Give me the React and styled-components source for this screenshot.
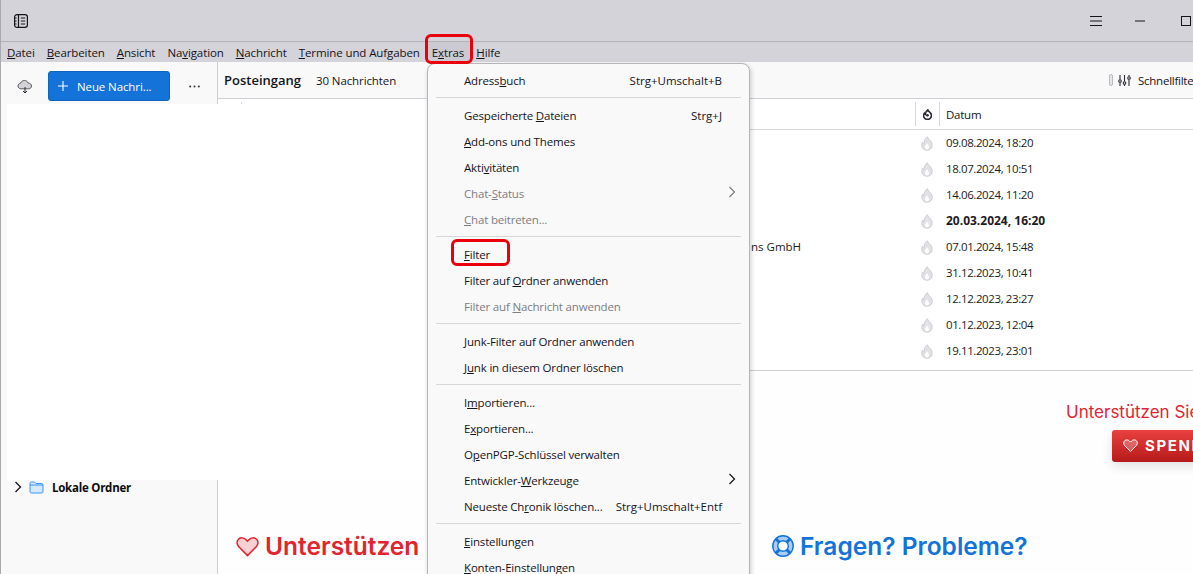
import styled, { createGlobalStyle } from "styled-components";

const GlobalStyle = createGlobalStyle`
  html, body {
    margin: 0;
    padding: 0;
    background: #fff;
  }
  body {
    font-family: "Open Sans", "Liberation Sans", sans-serif;
    font-size: 11.5px;
    letter-spacing: -0.25px;
    color: #15141a;
  }
`;

//MENU DATA ("&" marks the access key)
const menuGroups = [
  [{ label: "Adress&buch", keys: "Strg+Umschalt+B" }],
  [
    { label: "Gespeicherte &Dateien", keys: "Strg+J" },
    { label: "&Add-ons und Themes" },
    { label: "Akti&vitäten" },
    { label: "Chat-&Status", off: true, sub: true },
    { label: "&Chat beitreten...", off: true },
  ],
  [
    { label: "&Filter" },
    { label: "Filter auf &Ordner anwenden" },
    { label: "Filter auf &Nachricht anwenden", off: true },
  ],
  [
    { label: "&Junk-Filter auf Ordner anwenden" },
    { label: "J&unk in diesem Ordner löschen" },
  ],
  [
    { label: "I&mportieren..." },
    { label: "E&xportieren..." },
    { label: "O&penPGP-Schlüssel verwalten" },
    { label: "Entwickler-&Werkzeuge", sub: true },
    { label: "Neueste Ch&ronik löschen...", keys: "Strg+Umschalt+Entf" },
  ],
  [{ label: "&Einstellungen" }, { label: "&Konten-Einstellungen" }],
];

const menuBarItems = [
  "&Datei",
  "&Bearbeiten",
  "&Ansicht",
  "Na&vigation",
  "&Nachricht",
  "&Termine und Aufgaben",
  "E&xtras",
  "&Hilfe",
];

const rows = [
  { date: "09.08.2024, 18:20" },
  { date: "18.07.2024, 10:51" },
  { date: "14.06.2024, 11:20" },
  { date: "20.03.2024, 16:20", unread: true },
  { date: "07.01.2024, 15:48", sender: "ns GmbH" },
  { date: "31.12.2023, 10:41" },
  { date: "12.12.2023, 23:27" },
  { date: "01.12.2023, 12:04" },
  { date: "19.11.2023, 23:01" },
  { date: "" },
];

const Label = ({ text }) => {
  const [before, after] = text.split("&");
  return (
    <span>
      {before}
      <u>{after[0]}</u>
      {after.slice(1)}
    </span>
  );
};

//FRAME

const Window = styled.div`
  position: relative;
  display: flex;
  flex-direction: column;
  width: 1193px;
  height: 574px;
  overflow: hidden;
  background: #fff;
  border-left: 1px solid #a9a9ae;
  box-sizing: border-box;
`;

const TitleBar = styled.div`
  display: flex;
  align-items: center;
  justify-content: space-between;
  flex: none;
  height: 41px;
  padding: 0 2px 0 12px;
  background: #d4d3d9;
  border-bottom: 1px solid #b4b4b8;
`;

const IconButton = styled.div`
  display: flex;
  align-items: center;
  color: #15141a;
`;

const WindowButtons = styled.div`
  display: flex;
  align-items: center;
  gap: 33px;

  svg:last-child {
    margin-left: 3px;
  }
`;

const MenuBar = styled.div`
  display: flex;
  flex: none;
  height: 20px;
  background: #d4d3d9;
`;

const MenuBarItem = styled.div`
  display: flex;
  align-items: center;
  padding: 0 6px;
  letter-spacing: -0.1px;
  background: ${(props) => (props.$open ? "#cbcad2" : "transparent")};
`;

const Body = styled.div`
  display: flex;
  flex: 1;
  min-height: 0;
`;

//SIDEBAR

const Sidebar = styled.div`
  display: flex;
  flex-direction: column;
  flex: none;
  width: 216px;
  background: #f9f9fa;
  border-right: 1px solid #cfcfd3;
`;

const SidebarHead = styled.div`
  display: flex;
  align-items: center;
  height: 48px;
  padding: 0 0 0 16px;
`;

const NewButton = styled.div`
  display: flex;
  align-items: center;
  box-sizing: border-box;
  width: 122px;
  height: 30px;
  margin-left: 15px;
  padding-left: 9px;
  gap: 9px;
  letter-spacing: -0.1px;
  color: #fff;
  background: #1373d9;
  border: 1px solid #0f64bd;
  border-radius: 3px;
`;

const Dots = styled.svg`
  margin-left: 19px;
`;

const FolderRow = styled.div`
  display: flex;
  align-items: center;
  gap: 7px;
  height: 22px;
  margin-top: 366px;
  padding-left: 13px;
  font-weight: 700;
  color: #0c0c0d;
`;

const FolderName = styled.span`
  margin-left: 1px;
`;

//MAIN

const Main = styled.div`
  display: flex;
  flex-direction: column;
  flex: 1;
  min-width: 0;
`;

const ListHead = styled.div`
  display: flex;
  align-items: center;
  flex: none;
  height: 37px;
  padding: 0 0 0 6px;
  box-sizing: border-box;
  background: #f9f9fa;
  border-bottom: 1px solid #cfcfd8;
`;

const FolderTitle = styled.div`
  width: 92px;
  font-size: 13px;
  font-weight: 600;
  letter-spacing: 0;
`;

const Count = styled.div`
  letter-spacing: -0.1px;
`;

const QuickFilter = styled.div`
  display: flex;
  align-items: center;
  margin-left: auto;
  width: 84px;
  white-space: nowrap;
  overflow: hidden;
  gap: 5px;

  & > * {
    flex: none;
  }
`;

const Toggle = styled.span`
  width: 2px;
  height: 10px;
  background: #e6e6ea;
  border: 1px solid #b9b9bf;
  border-radius: 2px;
`;

const FilterText = styled.span`
  margin-left: 2px;
`;

const ColumnHead = styled.div`
  display: grid;
  grid-template-columns: 23px 674px 24px 1fr;
  align-items: center;
  flex: none;
  height: 31px;
  box-sizing: border-box;
  border-bottom: 1px solid #d7d7db;
`;

const HeadCell = styled.div`
  display: flex;
  align-items: center;
  justify-content: ${(props) => (props.$center ? "center" : "flex-start")};
  height: 24px;
  padding-left: ${(props) => (props.$center ? "0" : "6px")};
  border-left: ${(props) => (props.$line ? "1px solid #d7d7db" : "none")};
`;

const List = styled.div`
  flex: none;
  height: 240px;
  overflow: hidden;
  border-bottom: 1px solid #cfcfd8;
`;

const Row = styled.div`
  display: grid;
  grid-template-columns: 697px 24px 1fr;
  align-items: center;
  height: 26px;
  font-size: ${(props) => (props.$unread ? "12px" : "11.5px")};
  font-weight: ${(props) => (props.$unread ? 700 : 400)};
  letter-spacing: ${(props) => (props.$unread ? "0" : "-0.4px")};
  color: #1c1b22;
`;

const Sender = styled.div`
  padding: 0 0 2px 533px;
  white-space: nowrap;
  letter-spacing: 0;
`;

const FlameCell = styled.div`
  display: flex;
  justify-content: center;
`;

const DateCell = styled.div`
  padding: 0 0 2px 7px;
`;

//MESSAGE PANE

const Pane = styled.div`
  flex: 1;
  display: flex;
  flex-direction: column;
  min-height: 0;
  background: #fefefe;
  letter-spacing: 0;
`;

const DonateBlock = styled.div`
  display: flex;
  flex-direction: column;
  align-items: flex-start;
  margin: 31px 0 0 848px;
  width: 200px;
  white-space: nowrap;
`;

const DonateText = styled.div`
  font-family: Inter, sans-serif;
  font-size: 17px;
  color: #e22332;
`;

const DonateButton = styled.div`
  display: flex;
  align-items: center;
  margin: 8px 0 0 46px;
  width: 130px;
  height: 32px;
  padding: 0 0 1px 11px;
  gap: 7px;
  box-sizing: border-box;
  font-family: Inter, sans-serif;
  font-size: 15px;
  font-weight: 700;
  letter-spacing: 1.6px;
  color: #fff;
  background: linear-gradient(#ea4040, #b51a1a);
  border-radius: 3px;
  box-shadow: 0 4px 12px rgba(0, 0, 0, 0.12);
`;

const Headings = styled.div`
  display: flex;
  margin-top: 69px;
  padding-left: 18px;
  white-space: nowrap;
`;

const Heading = styled.div`
  display: flex;
  align-items: center;
  gap: 6px;
  width: ${(props) => props.$width}px;
  font-family: Inter, sans-serif;
  font-size: 24.5px;
  font-weight: 600;
  color: ${(props) => props.$color};
`;

//POPUP MENU

const Popup = styled.div`
  position: absolute;
  top: 63px;
  left: 426px;
  width: 323px;
  height: 530px;
  padding-top: 4px;
  box-sizing: border-box;
  background: #f9f9fa;
  border: 1px solid #b5b5b9;
  border-radius: 8px;
  box-shadow: 1px 2px 5px rgba(0, 0, 0, 0.2);
`;

const MenuRow = styled.div`
  display: flex;
  align-items: center;
  box-sizing: border-box;
  height: 26px;
  padding: 0 27px 2px 36px;
  position: relative;
  white-space: nowrap;
  letter-spacing: -0.17px;
  color: ${(props) => (props.$off ? "#7d7d85" : "#15141a")};
`;

const Keys = styled.span`
  margin-left: auto;
  letter-spacing: 0;
`;

const Chevron = styled.svg`
  position: absolute;
  right: 13px;
  top: 5px;
`;

const Separator = styled.div`
  height: 1px;
  margin: 3px 8px 5px;
  background: #d7d7db;
`;

//OVERLAYS

const Blank = styled.div`
  position: absolute;
  top: 104px;
  left: 6px;
  width: 420px;
  height: 376px;
  background: #fff;
`;

const Marker = styled.div`
  position: absolute;
  left: ${(props) => props.$x}px;
  top: ${(props) => props.$y}px;
  width: ${(props) => props.$w}px;
  height: ${(props) => props.$h}px;
  box-sizing: border-box;
  border: 3px solid #e8000d;
  border-radius: 6px;
`;

//ICONS

const PanelIcon = () => (
  <svg width="16" height="16" viewBox="0 0 16 16" fill="none" stroke="#15141a" strokeWidth="1.2">
    <rect x="1.6" y="1.6" width="12.8" height="12.8" rx="2.4" />
    <path d="M5.5 2v12M7.8 5h4.4M7.8 8h4.4M7.8 11h4.4M2 5h1.6M2 8h1.6M2 11h1.6" />
  </svg>
);

const CloudIcon = () => (
  <svg width="16" height="16" viewBox="0 0 16 16">
    <path
      d="M4 10.8C2 10.8 1 9.5 1 8c0-1.5 1-2.7 2.6-2.8C4.2 3.4 5.8 2.4 7.5 2.5c1.8 0 3.2 1.1 3.7 2.6 1.9 0 3.3 1.3 3.3 3 0 1.6-1.2 2.7-3 2.7z"
      fill="#d2d2d6"
      stroke="#5a5a60"
      strokeWidth="1"
    />
    <path d="M8 9v6M6 13l2 2 2-2" fill="none" stroke="#2b2a33" strokeWidth="1" />
  </svg>
);

const SlidersIcon = () => (
  <svg width="13" height="13" viewBox="0 0 13 13" fill="none" stroke="#2b2a33" strokeWidth="1.1">
    <path d="M2 1v4.500M2 8.500V12M6.500 1v6.500M6.500 10.500V12M11 1v1.500M11 5.500V12" />
    <circle cx="2" cy="7" r="1.3" />
    <circle cx="6.5" cy="9" r="1.3" />
    <circle cx="11" cy="4" r="1.3" />
  </svg>
);

const ThreadIcon = () => (
  <svg width="9" height="11" viewBox="0 0 11 13">
    <path
      d="M5.8.8C6 2.600 8 3 9.400 5c1.300 2 1 4.600-.6 6.100-1.800 1.500-4.800 1.500-6.600 0C.5 9.600.4 7 1.600 5.200 2 6 2.500 6.400 3 6.600 2.800 4.300 3.900 2 5.800.8z"
      fill="none"
      stroke="#2b2a33"
      strokeWidth="2"
    />
    <circle cx="5.5" cy="7.5" r="1.6" fill="#2b2a33" />
  </svg>
);

const FlameIcon = () => (
  <svg width="12" height="15" viewBox="0 0 12 15">
    <path
      d="M6.500.8c.2 2 2.400 3 3.800 5.200 1.400 2.300 1.100 5.200-.7 7C8.800 13.700 7.600 14.200 6 14.200c-1.700 0-3-.5-3.800-1.400C.5 11 .3 8.200 1.700 6.100 2 7 2.500 7.500 3.100 7.800 2.800 5.200 4.300 2.300 6.500.8z"
      fill="#e2e2e6"
      stroke="#cdcdd2"
      strokeWidth="1"
    />
    <path d="M6 7c.4 1.500 2 2.300 2 4.100 0 1.400-.9 2.400-2 2.400s-2-1-2-2.400C4 9.300 5.500 8.700 6 7z" fill="#fff" />
  </svg>
);

const FolderIcon = () => (
  <svg width="15" height="13" viewBox="0 0 15 13">
    <path
      d="M1 2.500A1.500 1.500 0 0 1 2.500 1h3L7 2.500h5.500A1.500 1.500 0 0 1 14 4v6.500a1.500 1.500 0 0 1-1.500 1.500h-10A1.500 1.500 0 0 1 1 10.500z"
      fill="#d5e9ff"
      stroke="#3a94f5"
      strokeWidth="1"
    />
    <path d="M1 4h13" stroke="#3a94f5" strokeWidth="1" />
  </svg>
);

const HeartIcon = ({ size, fill, stroke }) => (
  <svg width={size} height={size} viewBox="0 0 24 24" fill={fill} stroke={stroke} strokeWidth="1.6">
    <path d="M12 21.500 2.900 12.300C.4 9.700.6 6.100 2.800 4.200 5 2.400 8.200 2.700 10.200 4.700L12 6.500l1.800-1.800c2-2 5.200-2.300 7.400-.5 2.200 1.900 2.400 5.500-.1 8.100z" />
  </svg>
);

const BuoyIcon = () => (
  <svg width="22" height="22" viewBox="0 0 22 22">
    <circle cx="11" cy="11" r="8" fill="none" stroke="#a9cdf5" strokeWidth="5" />
    <circle cx="11" cy="11" r="10.2" fill="none" stroke="#1373d9" strokeWidth="1.4" />
    <circle cx="11" cy="11" r="5.3" fill="#fff" stroke="#1373d9" strokeWidth="1.4" />
    <path d="M3.800 3.800 7.300 7.300M18.200 3.800 14.700 7.300M3.800 18.200 7.300 14.700M18.200 18.200 14.700 14.700" stroke="#1373d9" strokeWidth="3" />
  </svg>
);

const ChevronRight = ({ color }) => (
  <svg width="8" height="12" viewBox="0 0 8 12" fill="none" stroke={color} strokeWidth="1.3">
    <path d="M1.500 1 6.500 6l-5 5" />
  </svg>
);

const App = () => {
  return (
    <>
      <GlobalStyle />
      <Window>
        <TitleBar>
          <IconButton>
            <PanelIcon />
          </IconButton>
          <WindowButtons>
            <svg width="12" height="10" viewBox="0 0 12 10" stroke="#15141a" strokeWidth="1">
              <path d="M0 .5h12M0 5h12M0 9.500h12" />
            </svg>
            <svg width="10" height="2" viewBox="0 0 10 2" stroke="#15141a" strokeWidth="1">
              <path d="M0 1h10" />
            </svg>
            <svg width="10" height="10" viewBox="0 0 10 10" fill="none" stroke="#15141a" strokeWidth="1">
              <rect x=".5" y=".5" width="9" height="9" />
            </svg>
          </WindowButtons>
        </TitleBar>

        <MenuBar>
          {menuBarItems.map((item) => (
            <MenuBarItem key={item} $open={item === "E&xtras"}>
              <Label text={item} />
            </MenuBarItem>
          ))}
        </MenuBar>

        <Body>
          <Sidebar>
            <SidebarHead>
              <CloudIcon />
              <NewButton>
                <svg width="10" height="10" viewBox="0 0 10 10" stroke="#fff" strokeWidth="1.1">
                  <path d="M5 0v10M0 5h10" />
                </svg>
                Neue Nachri...
              </NewButton>
              <Dots width="11" height="3" viewBox="0 0 11 3" fill="#33323a">
                <circle cx="1.2" cy="1.5" r="1" />
                <circle cx="5.5" cy="1.5" r="1" />
                <circle cx="9.8" cy="1.5" r="1" />
              </Dots>
            </SidebarHead>
            <FolderRow>
              <ChevronRight color="#15141a" />
              <FolderIcon />
              <FolderName>Lokale Ordner</FolderName>
            </FolderRow>
          </Sidebar>

          <Main>
            <ListHead>
              <FolderTitle>Posteingang</FolderTitle>
              <Count>30 Nachrichten</Count>
              <QuickFilter>
                <Toggle />
                <SlidersIcon />
                <FilterText>Schnellfilter</FilterText>
              </QuickFilter>
            </ListHead>

            <ColumnHead>
              <div />
              <HeadCell $line />
              <HeadCell $center $line>
                <ThreadIcon />
              </HeadCell>
              <HeadCell $line>Datum</HeadCell>
            </ColumnHead>

            <List>
              {rows.map((row) => (
                <Row key={row.date} $unread={row.unread}>
                  <Sender>{row.sender}</Sender>
                  <FlameCell>
                    <FlameIcon />
                  </FlameCell>
                  <DateCell>{row.date}</DateCell>
                </Row>
              ))}
            </List>

            <Pane>
              <DonateBlock>
                <DonateText>Unterstützen Sie</DonateText>
                <DonateButton>
                  <HeartIcon size={15} fill="rgba(255,255,255,0.25)" stroke="#fff" />
                  SPENDEN
                </DonateButton>
              </DonateBlock>
              <Headings>
                <Heading $width={536} $color="#e0252f">
                  <HeartIcon size={23} fill="#f8d0d3" stroke="#e0252f" />
                  Unterstützen
                </Heading>
                <Heading $width={300} $color="#1373d9">
                  <BuoyIcon />
                  Fragen? Probleme?
                </Heading>
              </Headings>
            </Pane>
          </Main>
        </Body>

        <Blank />

        <Popup>
          {menuGroups.map((group, i) => (
            <div key={i}>
              {i > 0 && <Separator />}
              {group.map((item) => (
                <MenuRow key={item.label} $off={item.off}>
                  <Label text={item.label} />
                  {item.keys && <Keys>{item.keys}</Keys>}
                  {item.sub && (
                    <Chevron width="8" height="12" viewBox="0 0 8 12" fill="none" stroke={item.off ? "#7d7d85" : "#15141a"} strokeWidth="1.2">
                      <path d="M1.500 1 6.500 6l-5 5" />
                    </Chevron>
                  )}
                </MenuRow>
              ))}
            </div>
          ))}
        </Popup>

        <Marker $x={424} $y={34} $w={48} $h={30} />
        <Marker $x={450} $y={239} $w={59} $h={27} />
      </Window>
    </>
  );
};

export default App;
